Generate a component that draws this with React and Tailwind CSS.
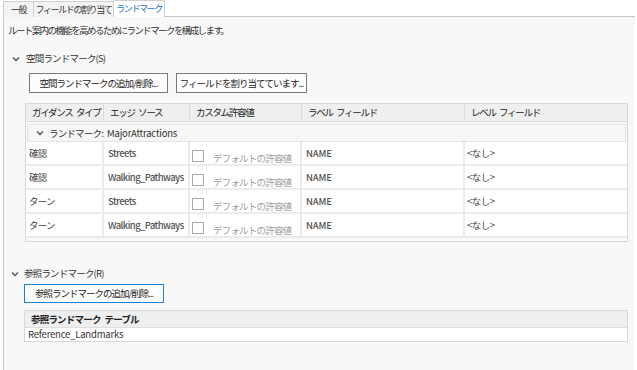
import React from 'react'

// Landmarks tab of a network dataset properties dialog

const font = { fontFamily: '"Noto Sans CJK JP", "Noto Sans", sans-serif' }

function Chevron({ className = '' }) {
  return (
    <svg width="8" height="6" viewBox="0 0 8 6" className={className}>
      <polyline points="1,1.5 4,4.5 7,1.5" fill="none" stroke="#555" strokeWidth="1.3" />
    </svg>
  )
}

function Btn({ children, focused, className = '' }) {
  return (
    <div
      className={
        'flex items-center justify-center whitespace-nowrap bg-[#fdfdfd] border text-[9.5px] text-[#222] tracking-[-1px] ' +
        (focused ? 'border-[#1a7fd4] ' : 'border-[#7a7a7a] ') +
        className
      }
    >
      {children}
    </div>
  )
}

const rows = [
  { type: '確認', src: 'Streets' },
  { type: '確認', src: 'Walking_Pathways' },
  { type: 'ターン', src: 'Streets' },
  { type: 'ターン', src: 'Walking_Pathways' },
]

const cols = 'grid grid-cols-[78px_86px_112px_163px_1fr]'
const sp = '\u2002'

export default function App() {
  return (
    <div className="w-[637px] h-[370px] bg-white overflow-hidden text-[#222] whitespace-nowrap" style={font}>
      {/* tabs */}
      <div className="flex items-end h-[17px] pl-[3px] text-[9px] tracking-[-1.4px]">
        <div className="h-[16px] w-[31px] shrink-0 justify-center flex items-center bg-[#f3f3f3] border border-b-0 border-[#cfcfcf] text-[#333]">
          一般
        </div>
        <div className="h-[16px] w-[80px] shrink-0 justify-center flex items-center bg-[#f3f3f3] border border-l-0 border-b-0 border-[#cfcfcf] text-[#333]">
          フィールドの割り当て
        </div>
        <div className="h-[17px] w-[51px] shrink-0 justify-center flex items-center bg-white border border-l-0 border-b-0 border-[#cfcfcf] text-[#1a6fc0]">
          ランドマーク
        </div>
        <div className="flex-1 border-b border-[#c8c8c8] mr-[2px]" />
      </div>

      {/* panel */}
      <div className="ml-[3px] mr-[2px] h-[353px] bg-[#f8f8f8] border-l border-[#c8c8c8] text-[9.5px] tracking-[-0.8px]">
        <p className="pt-[7px] pl-[4px] leading-[13px] text-[#333] tracking-[-1.6px]">
          ルート案内の機能を高めるためにランドマークを構成します。
        </p>

        <div className="flex items-center mt-[15px] h-[13px] pl-[8px] gap-[6px]">
          <Chevron />
          <span className="text-[#333]">空間ランドマーク(S)</span>
        </div>

        <div className="flex gap-[8px] mt-[8px] pl-[25px]">
          <Btn className="w-[139px] h-[20px]">空間ランドマークの追加/削除...</Btn>
          <Btn className="w-[131px] h-[20px]">フィールドを割り当てています...</Btn>
        </div>

        {/* spatial landmarks grid */}
        <div className="ml-[21px] mt-[10px] w-[603px] h-[139px] border border-[#d8d8d8] bg-[#f8f8f8]">
          <div className={cols + ' h-[18px] bg-[#efefef] border-b border-[#dcdcdc] items-center text-[#222] tracking-[-1.3px]'}>
            <div className="pl-[6px] h-full flex items-center border-r border-[#dcdcdc] overflow-hidden">ガイダンス{sp}タイプ</div>
            <div className="pl-[6px] h-full flex items-center border-r border-[#dcdcdc] overflow-hidden">エッジ{sp}ソース</div>
            <div className="pl-[6px] h-full flex items-center border-r border-[#dcdcdc] overflow-hidden">カスタム許容値</div>
            <div className="pl-[6px] h-full flex items-center border-r border-[#dcdcdc] overflow-hidden">ラベル{sp}フィールド</div>
            <div className="pl-[6px] h-full flex items-center overflow-hidden">レベル{sp}フィールド</div>
          </div>

          <div className="mx-[1px] mt-[2px] h-[18px] bg-[#f6f6f6] border border-[#e4e4e4] flex items-center pl-[8px] gap-[5px]">
            <Chevron />
            <span className="text-[#333]">
              ランドマーク:{sp}<span className="tracking-[-0.2px]">MajorAttractions</span>
            </span>
          </div>

          {rows.map((r, i) => (
            <div key={i} className={cols + ' h-[24px] border-b-2 border-[#ebebeb] text-[#444]'}>
              <div className="bg-white pl-[3px] pt-[4px] border-r-2 border-[#ebebeb]">{r.type}</div>
              <div className="bg-white pl-[4px] pt-[4px] border-r-2 border-[#ebebeb] font-medium text-[#555] tracking-[-0.6px] overflow-hidden">
                {r.src}
              </div>
              <div className="bg-white pl-[2px] pt-[8px] border-r-2 border-[#ebebeb] flex items-start gap-[9px] overflow-hidden">
                <div className="w-[12px] h-[12px] border border-[#a8a8a8] bg-white shrink-0" />
                <span className="text-[#a0a0a0] pt-[1px]">デフォルトの許容値</span>
              </div>
              <div className="bg-white pl-[4px] pt-[4px] border-r-2 border-[#ebebeb] font-medium text-[#555] tracking-[-0.2px]">
                NAME
              </div>
              <div className="bg-white pl-[2px] pt-[4px] tracking-[-0.5px]">&lt;なし&gt;</div>
            </div>
          ))}
        </div>

        <div className="flex items-center mt-[25px] h-[13px] pl-[7px] gap-[5px]">
          <Chevron />
          <span className="text-[#333]">参照ランドマーク(R)</span>
        </div>

        <div className="mt-[4px] pl-[20px]">
          <Btn focused className="w-[140px] h-[19px]">参照ランドマークの追加/削除...</Btn>
        </div>

        {/* reference landmarks table */}
        <div className="ml-[20px] mt-[7px] w-[604px] border border-[#d8d8d8]">
          <div className="h-[17px] bg-[#efefef] border-b border-[#dedede] flex items-center pl-[6px] font-bold text-[#222]">
            参照ランドマーク{sp}テーブル
          </div>
          <div className="h-[13px] bg-white flex items-center pl-[3px] text-[#333] tracking-[-0.2px]">
            Reference_Landmarks
          </div>
        </div>
      </div>
    </div>
  )
}
